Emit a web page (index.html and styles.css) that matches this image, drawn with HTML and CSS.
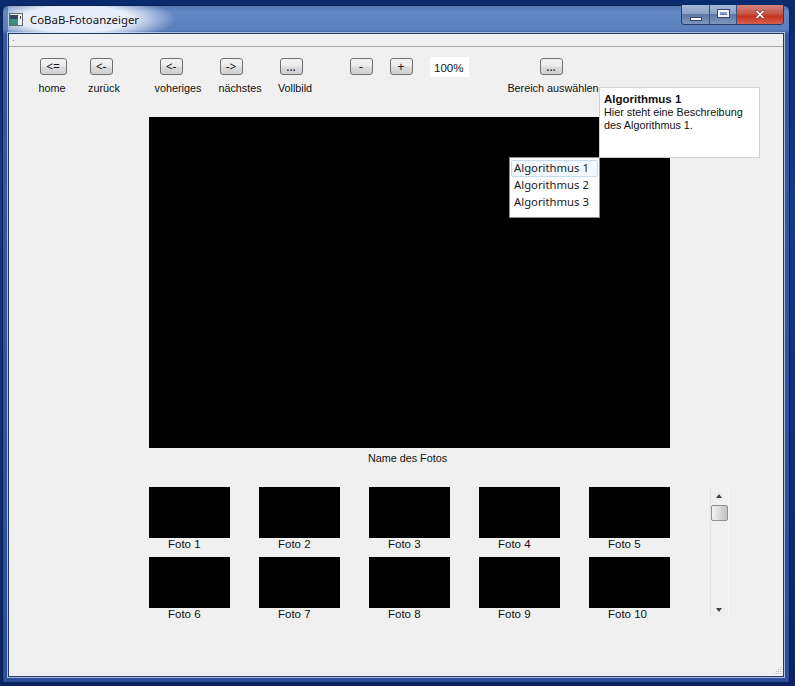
FILE: index.html

```html
<!DOCTYPE html>
<html lang="de">
<head>
  <meta charset="UTF-8">
  <title>CoBaB-Fotoanzeiger</title>
  <link rel="stylesheet" href="styles.css">
</head>
<body>
  <div class="window">
    <div class="titlebar">
      <svg class="app-icon" width="14" height="13" viewBox="0 0 14 13">
        <rect x="0.5" y="0.5" width="13" height="12" fill="#eef0f2" stroke="#666"/>
        <rect x="1" y="2" width="8" height="10" fill="#3d8f80"/>
        <rect x="1" y="2" width="8" height="4" fill="#2c4a5e"/>
        <rect x="11" y="3" width="1" height="3" fill="#444"/>
      </svg>
      <span class="title">CoBaB-Fotoanzeiger</span>
      <div class="win-buttons">
        <div class="win-btn btn-min"><span class="glyph-min"></span></div>
        <div class="win-btn btn-max"><span class="glyph-max"></span></div>
        <div class="win-btn btn-close">
          <svg width="14" height="11" viewBox="0 0 14 11">
            <path d="M2 1.5h2.5L7 4l2.5-2.5H12L8.5 5.5 12 9.5H9.5L7 7 4.500 9.500H2l3.500-4z" fill="#fff" stroke="#6b2a22" stroke-width="0.6"/>
          </svg>
        </div>
      </div>
    </div>

    <div class="client">
      <div class="menubar"><span class="menu-dot"></span></div>

      <div class="toolbar">
        <div class="tool w48"><button class="btn wide">&lt;=</button><span class="lbl-home">home</span></div>
        <div class="tool w48"><button class="btn">&lt;-</button><span class="lbl-back">zurück</span></div>
        <div class="tool w60 gap-l"><button class="btn">&lt;-</button><span class="lbl-prev">voheriges</span></div>
        <div class="tool w60"><button class="btn">-&gt;</button><span class="lbl-next">nächstes</span></div>
        <div class="tool w60"><button class="btn">...</button><span class="lbl-full">Vollbild</span></div>
        <div class="tool w40 gap-m"><button class="btn">-</button></div>
        <div class="tool w40"><button class="btn">+</button></div>
        <div class="zoom-field">100%</div>
        <div class="tool w102 gap-r"><button class="btn">...</button><span class="lbl-area">Bereich auswählen</span></div>
      </div>

      <div class="stage">
        <div class="photo"></div>
        <div class="photo-name">Name des Fotos</div>
      </div>

      <div class="gallery">
        <div class="thumbs">
          <div class="thumb"><div class="thumb-img"></div><span>Foto 1</span></div>
          <div class="thumb"><div class="thumb-img"></div><span>Foto 2</span></div>
          <div class="thumb"><div class="thumb-img"></div><span>Foto 3</span></div>
          <div class="thumb"><div class="thumb-img"></div><span>Foto 4</span></div>
          <div class="thumb"><div class="thumb-img"></div><span>Foto 5</span></div>
          <div class="thumb"><div class="thumb-img"></div><span>Foto 6</span></div>
          <div class="thumb"><div class="thumb-img"></div><span>Foto 7</span></div>
          <div class="thumb"><div class="thumb-img"></div><span>Foto 8</span></div>
          <div class="thumb"><div class="thumb-img"></div><span>Foto 9</span></div>
          <div class="thumb"><div class="thumb-img"></div><span>Foto 10</span></div>
        </div>
        <div class="scrollbar">
          <span class="arrow-up"></span>
          <div class="scroll-thumb"></div>
          <span class="arrow-down"></span>
        </div>
      </div>

      <svg class="grip" width="8" height="8" viewBox="0 0 8 8">
        <path d="M6 0h1v1H6zM4 2h1v1H4zM6 2h1v1H6zM2 4h1v1H2zM4 4h1v1H4zM6 4h1v1H6zM0 6h1v1H0zM2 6h1v1H2zM4 6h1v1H4zM6 6h1v1H6z" fill="#bbb"/>
      </svg>

      <ul class="algo-menu">
        <li class="active">Algorithmus 1</li>
        <li>Algorithmus 2</li>
        <li>Algorithmus 3</li>
      </ul>
      <div class="algo-tip">
        <b>Algorithmus 1</b><br>
        Hier steht eine Beschreibung<br>
        des Algorithmus 1.
      </div>
    </div>
  </div>
</body>
</html>
```

FILE: styles.css

```css
html, body {
  margin: 0;
  height: 686px;
  overflow: hidden;
}
body {
  background: linear-gradient(180deg, #0a2a6e, #123a8c 30%, #0a2463);
  font-family: "Liberation Sans", Arial, sans-serif;
  font-size: 10.8px;
  color: #111;
  padding: 5px 5px 3px 2px;
  box-sizing: border-box;
}
.window {
  height: 678px;
  box-sizing: border-box;
  border: 1px solid #0c1f4a;
  border-radius: 6px 6px 3px 3px;
  background: linear-gradient(180deg, #4f76b4 0, #6488c2 6px, #5a7fbc 24px, #36589f 28px, #2c4f9a 100%);
  padding: 0 5px 5px 5px;
  display: flex;
  flex-direction: column;
}
.titlebar {
  height: 27px;
  display: flex;
  align-items: center;
  padding-bottom: 1px;
  box-sizing: border-box;
  background: radial-gradient(ellipse 100px 24px at 68px 13px, rgba(240,244,252,0.95) 55%, rgba(235,240,250,0) 100%);
}
.app-icon {
  margin: 0 7px 0 1px;
}
.title {
  font-family: "Noto Sans", sans-serif;
  font-size: 11.4px;
  color: #111;
}
.win-buttons {
  margin-left: auto;
  align-self: flex-start;
  display: flex;
  height: 19px;
  margin-top: -1px;
  border: 1px solid #2a3c64;
  border-top: 0;
  border-radius: 0 0 4px 4px;
  overflow: hidden;
}
.win-btn {
  display: flex;
  align-items: center;
  justify-content: center;
  border-right: 1px solid #3b4f78;
  background: linear-gradient(180deg, #a4b7d4, #8ba2c6 45%, #5f79a6 50%, #7f96bd);
}
.btn-min { width: 27px; }
.btn-max { width: 26px; }
.btn-close {
  width: 46px;
  border-right: 0;
  background: linear-gradient(180deg, #d3847a, #c8564b 45%, #c6331f 60%, #d4614f);
}
.glyph-min {
  width: 10px;
  height: 2px;
  margin-top: 8px;
  background: #fff;
  border: 1px solid #35476c;
}
.glyph-max {
  width: 7px;
  height: 3px;
  margin-bottom: 3px;
  border: 2px solid #f2f5fa;
  outline: 1px solid #35476c;
}
.client {
  position: relative;
  flex: 1;
  background: #f0f0f0;
  border: 1px solid #22386a;
  box-shadow: 0 0 0 1px rgba(220,230,245,0.7);
}
.menubar {
  height: 12px;
  border-bottom: 1px solid #a9a9a9;
  position: relative;
}
.menu-dot {
  position: absolute;
  left: 4px;
  top: 6px;
  width: 1px;
  height: 1px;
  background: #888;
}
.toolbar {
  display: flex;
  align-items: flex-start;
  padding: 11px 0 0 20px;
  height: 70px;
  box-sizing: border-box;
}
.tool {
  display: flex;
  flex-direction: column;
  align-items: center;
  gap: 6px;
  flex: none;
}
.tool span {
  line-height: 15px;
  white-space: nowrap;
}
.lbl-home { margin-left: -2px; }
.lbl-back { margin-left: 6px; }
.lbl-prev { margin-left: 14px; }
.lbl-next { margin-left: 18px; }
.lbl-full { margin-left: 8px; }
.lbl-area { margin-left: 4px; }
.w40 { width: 40px; }
.w48 { width: 48px; }
.w60 { width: 60px; }
.w102 { width: 102px; }
.gap-l { margin-left: 16px; }
.gap-m { margin-left: 20px; }
.gap-r { margin-left: 31px; }
.btn {
  width: 23px;
  height: 17px;
  padding: 0;
  box-sizing: border-box;
  border: 1px solid #707070;
  border-radius: 3px;
  background: linear-gradient(180deg, #f2f2f2, #ebebeb 48%, #dddddd 52%, #cfcfcf);
  font-family: "Noto Sans", sans-serif;
  font-size: 12px;
  line-height: 13px;
  color: #111;
}
.btn.wide { width: 27px; }
.zoom-field {
  width: 39px;
  height: 20px;
  margin: -1px 0 0 9px;
  padding-left: 4px;
  box-sizing: border-box;
  background: #fff;
  font-size: 11.5px;
  line-height: 22px;
  flex: none;
}
.stage {
  width: 521px;
  margin-left: 140px;
}
.photo {
  height: 331px;
  background: #000;
}
.photo-name {
  text-align: center;
  line-height: 20px;
  padding-right: 4px;
}
.gallery {
  display: flex;
  align-items: flex-start;
  margin: 19px 0 0 140px;
}
.thumbs {
  display: grid;
  grid-template-columns: repeat(5, 81px);
  column-gap: 29px;
  width: 521px;
}
.thumb {
  height: 70px;
}
.thumb-img {
  height: 51px;
  background: #000;
}
.thumb span {
  display: block;
  padding-left: 19px;
  font-size: 11.5px;
  line-height: 12px;
  white-space: nowrap;
}
.scrollbar {
  position: relative;
  flex: none;
  width: 19px;
  height: 130px;
  margin: 1px 0 0 40px;
  border-left: 1px solid #e4e4e4;
  border-right: 1px solid #f6f6f6;
  box-sizing: border-box;
}
.arrow-up, .arrow-down {
  position: absolute;
  left: 5px;
  width: 0;
  height: 0;
  border-left: 3px solid transparent;
  border-right: 3px solid transparent;
}
.arrow-up { top: 6px; border-bottom: 4px solid #444; }
.arrow-down { bottom: 6px; border-top: 4px solid #444; }
.scroll-thumb {
  position: absolute;
  top: 17px;
  left: 0;
  width: 17px;
  height: 16px;
  box-sizing: border-box;
  border: 1px solid #8f8f8f;
  border-radius: 2px;
  background: linear-gradient(90deg, #f2f2f2, #d8d8d8 55%, #c4c4c4);
}
.grip {
  position: absolute;
  right: 1px;
  bottom: 1px;
}
.algo-menu {
  position: absolute;
  left: 500px;
  top: 123px;
  width: 91px;
  height: 61px;
  margin: 0;
  padding: 2px 1px;
  box-sizing: border-box;
  list-style: none;
  background: #fff;
  border: 1px solid #8a8a8a;
  font-family: "Noto Sans", sans-serif;
  font-size: 11.3px;
  color: #222;
}
.algo-menu li {
  height: 17px;
  line-height: 14px;
  padding-left: 2px;
  border: 1px solid transparent;
  box-sizing: border-box;
}
.algo-menu li.active {
  background: #f2f8fd;
  border-color: #c6dcf0;
  border-radius: 2px;
}
.algo-tip {
  position: absolute;
  left: 590px;
  top: 53px;
  width: 161px;
  height: 71px;
  padding: 5px 4px;
  box-sizing: border-box;
  background: #fff;
  border: 1px solid #d0d0d0;
  line-height: 13px;
  color: #111;
}
.algo-tip b {
  font-size: 11.5px;
}
```
